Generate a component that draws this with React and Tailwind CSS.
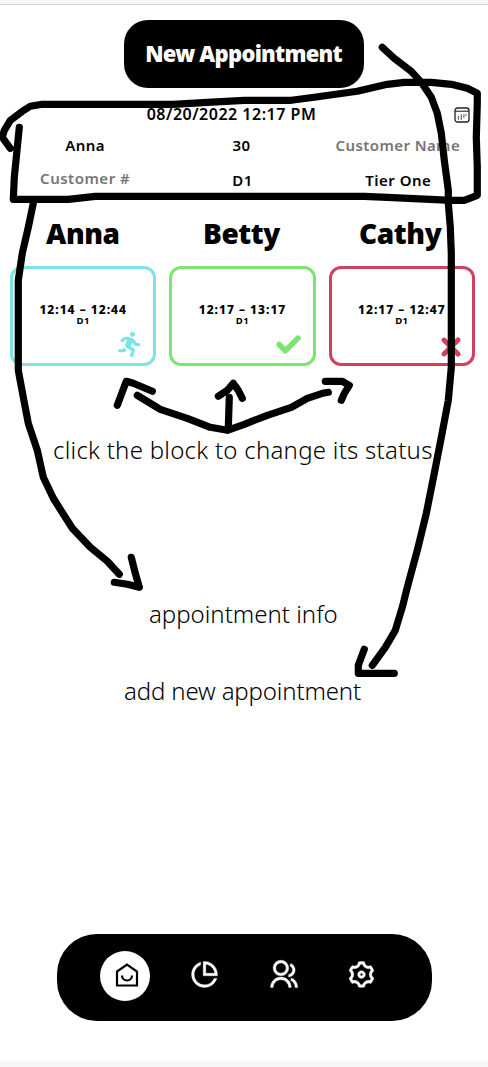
import { FaPersonRunning, FaCheck, FaXmark } from "react-icons/fa6";
import { RiPieChartLine, RiGroupLine, RiSettings3Line } from "react-icons/ri";

const strokes = [
  "M10 148L2 137L4 130L10 120L22 111L30 106L42 104H173L207 102L244 100H291L314 97L357 91L387 84L404 82H431L451 84L467 88L477 93V103L476 137L477 167V195L464 200H451L387 197L364 196H95L68 199H13L14 177L17 147L19 127",
  "M382 47L394 58L411 71L421 82L431 97L437 113L441 133L444 160L448 190V203L450 227L451 253V367L448 400L441 437L434 473L426 513L417 550L407 587L402 607L395 630L385 647L372 665",
  "M364 649L358 665V673H394",
  "M33 203L28 227L22 253L18 280V370L23 397L28 423L37 450L43 477L53 498L72 528L90 547L107 561L119 574",
  "M131 557L135 573L139 587L127 584L114 582",
  "M117 405L126 381L133 383L152 391",
  "M137 395L160 409L187 418L210 427L227 430L244 424L267 415L291 407L307 398L322 393L328 392",
  "M325 381H342L349 385L344 393L341 400",
  "M228 427L229 397",
  "M218 396L227 390L233 383L238 390L242 398",
];

function CalendarIcon() {
  return (
    <svg className="ml-px h-4 w-4" viewBox="0 0 16 16" fill="none" stroke="#222">
      <rect x="1" y="1" width="14" height="14" rx="2.5" strokeWidth="1.3" />
      <path d="M1 4.2H15" strokeWidth="1.1" />
      <path d="M6.7 8H8M9.2 8H10.5M11.3 8H12.6M3.8 9.9H5.1M6.7 9.9H8M9.2 9.9H10.5M3.8 11.8H5.1M6.7 11.8H8" strokeWidth="1.2" />
    </svg>
  );
}

function HomeIcon() {
  return (
    <svg className="mt-[-2px] ml-[3px] h-[26px] w-[26px]" viewBox="0 0 26 26" fill="none" stroke="currentColor" strokeWidth="2.2">
      <path d="M3 9.5L13 2.5L23 9.5V23.5H3Z" />
      <path d="M8 13.5A5 5 0 0 0 18 13.5" />
    </svg>
  );
}

function Card({ time, border, children }) {
  return (
    <div className={`relative flex h-[100px] flex-col items-center rounded-[12px] border-3 pt-[33px] ${border}`}>
      <div className="h-[13px] whitespace-nowrap text-[12px] leading-[16px] font-extrabold tracking-[1px] text-black">{time}</div>
      <div className="text-[9.5px] leading-[12px] font-bold tracking-[0.5px] text-black">D1</div>
      {children}
    </div>
  );
}

export default function App() {
  return (
    <main className="relative flex h-[1067px] w-[488px] flex-col overflow-hidden bg-white font-['Noto_Sans',sans-serif] text-black">
      <div className="h-[5px] shrink-0 border-b border-[#d6d6d6] bg-[#f5f5f5]" />
      <button className="mt-[15px] ml-[124px] flex h-[68px] w-[240px] shrink-0 items-center justify-center rounded-[24px] bg-black pr-px pb-px text-[22px] font-black tracking-[-0.75px] whitespace-nowrap text-white">
        New Appointment
      </button>
      <section className="mx-[10px] mt-[17px] flex h-[94px] w-[465px] shrink-0 flex-col">
        <div className="flex h-5 items-center">
          <span className="w-[443px] pb-[2px] text-center text-[16px] font-semibold tracking-[0.5px]">08/20/2022 12:17 PM</span>
          <CalendarIcon />
        </div>
        <div className="mt-[10px] grid h-5 grid-cols-3 gap-[13px] text-center text-[15px] leading-5 font-semibold tracking-[0.4px]">
          <span className="pl-1">Anna</span>
          <span className="pr-[2px]">30</span>
          <span className="pr-2 whitespace-nowrap text-[#757575]">Customer Name</span>
        </div>
        <div className="mt-[15px] grid h-5 grid-cols-3 gap-[13px] text-center text-[15px] leading-5 font-semibold tracking-[0.5px]">
          <span className="-mt-[2px] pl-1 text-[#757575]">Customer #</span>
          <span>D1</span>
          <span className="pr-[7px]">Tier One</span>
        </div>
      </section>
      <section className="mx-[10px] mt-[14px] grid h-[40px] w-[465px] shrink-0 grid-cols-3 gap-[13px] pr-[2px] text-center text-[28px] leading-[41px] font-black tracking-[-0.4px]">
        <h2>Anna</h2>
        <h2>Betty</h2>
        <h2>Cathy</h2>
      </section>
      <section className="mx-[10px] mt-[13px] grid w-[465px] shrink-0 grid-cols-3 gap-[13px]">
        <Card time="12:14 – 12:44" border="border-[#7ce4e4]">
          <FaPersonRunning className="absolute right-[11px] bottom-[6px] h-[25px] w-[24px] text-[#7ce4e4]" preserveAspectRatio="none" />
        </Card>
        <Card time="12:17 – 13:17" border="border-[#7ce570]">
          <FaCheck className="absolute right-[12px] bottom-[6px] h-[25px] w-[25px] overflow-visible stroke-current stroke-[50px] text-[#7ce570]" />
        </Card>
        <Card time="12:17 – 12:47" border="border-[#d24260]">
          <FaXmark className="absolute right-[7px] bottom-[2px] h-[28px] w-[28px] overflow-visible stroke-current stroke-[28px] text-[#d24260]" />
        </Card>
      </section>
      <section className="flex shrink-0 flex-col text-[24px] leading-[32px] font-light whitespace-nowrap">
        <p className="mt-[68px] ml-[53px] h-8 tracking-[0.26px]">click the block to change its status</p>
        <p className="mt-[132px] ml-[149px] h-8">appointment info</p>
        <p className="mt-[45px] ml-[124px] h-8 tracking-[-0.15px]">add new appointment</p>
      </section>
      <nav className="mt-[227px] ml-[57px] flex h-[87px] w-[375px] shrink-0 items-center rounded-[40px] bg-black pl-[43px] text-white">
        <button className="-mt-[3px] flex h-[50px] w-[50px] items-center justify-center rounded-full bg-white text-black">
          <HomeIcon />
        </button>
        <button className="-mt-[6px] ml-[39px] h-[31px] w-[31px]"><RiPieChartLine className="h-[31px] w-[31px] stroke-current stroke-[0.3px]" /></button>
        <button className="-mt-[6px] ml-[48px] h-[31px] w-[31px]"><RiGroupLine className="h-[31px] w-[31px] stroke-current stroke-[0.3px]" /></button>
        <button className="-mt-[6px] ml-[47px] h-[31px] w-[31px]"><RiSettings3Line className="h-[31px] w-[31px] stroke-current stroke-[0.3px]" /></button>
      </nav>
      <div className="mt-10 h-[6px] shrink-0 bg-[#f7f7f7]" />
      <svg className="pointer-events-none absolute inset-0 h-[1067px] w-[488px]" viewBox="-0.3 -0.3 488 1067" fill="none" stroke="black" strokeWidth="7.2" strokeLinecap="round" strokeLinejoin="round">
        {strokes.map((d) => <path key={d} d={d} />)}
      </svg>
    </main>
  );
}
